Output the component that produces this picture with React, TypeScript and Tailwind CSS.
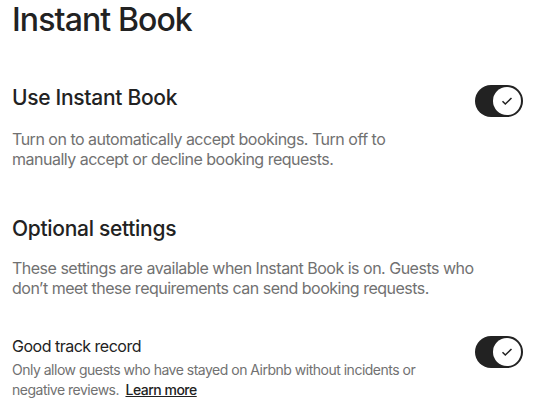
import React, { useState } from "react";

function Toggle({ on, onChange }: { on: boolean; onChange: () => void }) {
  return (
    <button
      onClick={onChange}
      className={`relative flex h-8 w-12 shrink-0 items-center rounded-full ${on ? "bg-[#222222]" : "bg-[#b0b0b0]"}`}
    >
      <span
        className={`absolute top-[2px] flex h-7 w-7 items-center justify-center rounded-full bg-white ${on ? "left-[18px]" : "left-[2px]"}`}
      >
        {on && (
          <svg width="12" height="12" viewBox="0 0 32 32" fill="none" stroke="#222222" strokeWidth="4">
            <path d="M4 16.5l7.5 7.5L28 8" />
          </svg>
        )}
      </span>
    </button>
  );
}

export default function App() {
  const [instant, setInstant] = useState(true);
  const [track, setTrack] = useState(true);

  return (
    <div
      className="w-[543px] bg-white pl-3 pr-5 text-[#222222]"
      style={{ fontFamily: "Inter, 'Noto Sans', sans-serif" }}
    >
      <h1 className="pt-[2px] text-[32px] font-medium leading-9 tracking-[-0.9px]">Instant Book</h1>

      {/* Use Instant Book */}
      <div className="mt-[47px] flex items-start justify-between">
        <div className="w-[420px]">
          <h2 className="text-[21px] font-medium leading-[26px] tracking-[-0.3px]">Use Instant Book</h2>
          <p className="mt-[18px] text-base leading-5 tracking-[-0.5px] text-[#717171]">
            Turn on to automatically accept bookings. Turn off to manually accept or decline booking requests.
          </p>
        </div>
        <Toggle on={instant} onChange={() => setInstant(!instant)} />
      </div>

      {/* Optional settings */}
      <div className="mt-[47px]">
        <h2 className="text-[21px] font-medium leading-[26px] tracking-[-0.3px]">Optional settings</h2>
        <p className="mt-[16px] max-w-[470px] text-base leading-5 tracking-[-0.5px] text-[#717171]">
          These settings are available when Instant Book is on. Guests who don’t meet these requirements can send booking requests.
        </p>
      </div>

      {/* Good track record */}
      <div className="mt-[38px] flex items-start justify-between">
        <div className="w-[420px]">
          <h3 className="text-base leading-5 tracking-[-0.5px]">Good track record</h3>
          <p className="mt-[4px] text-sm leading-5 tracking-[-0.5px] text-[#717171]">
            Only allow guests who have stayed on Airbnb without incidents or negative reviews.{" "}
            <a href="#" className="ml-[3px] font-medium text-[#222222] underline">Learn more</a>
          </p>
        </div>
        <Toggle on={track} onChange={() => setTrack(!track)} />
      </div>
    </div>
  );
}
